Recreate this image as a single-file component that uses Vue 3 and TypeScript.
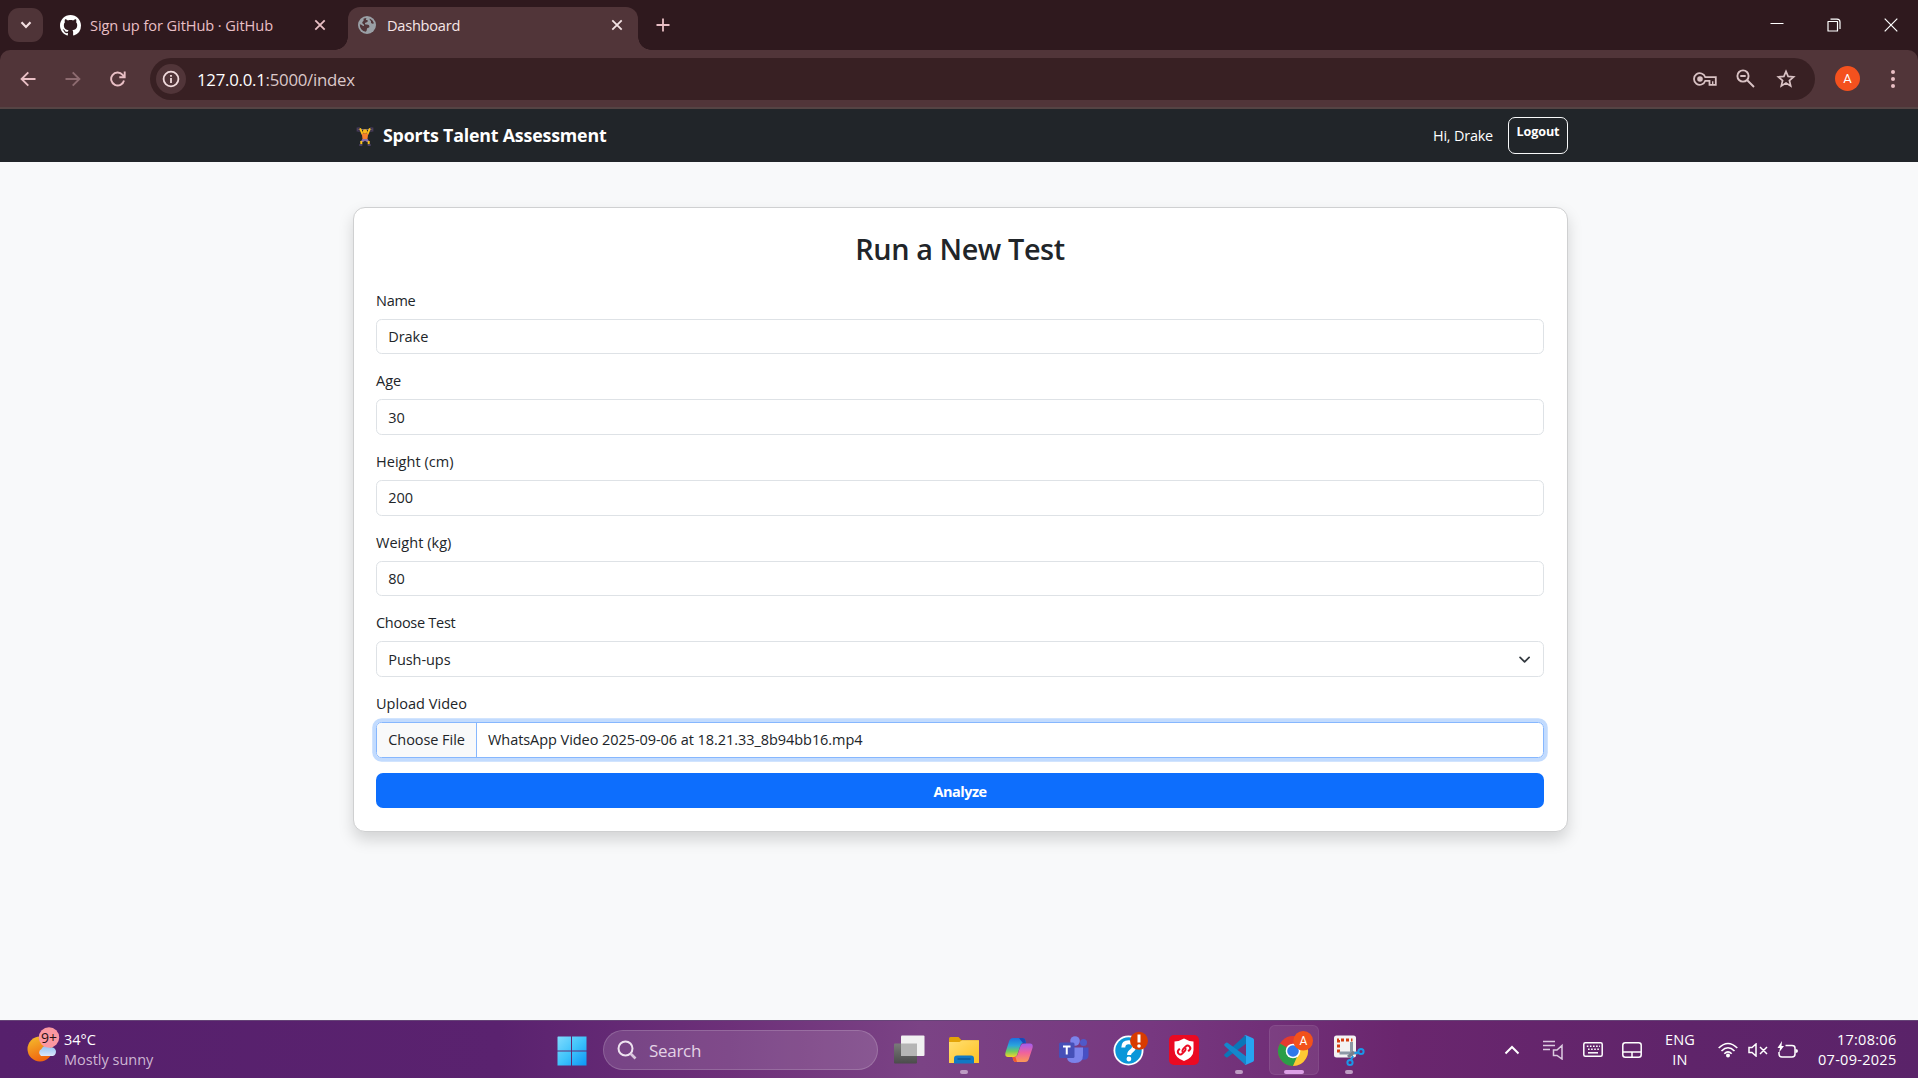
<script setup lang="ts">
interface Field {
  label: string
  value: string
  tight?: boolean
}

const fields: Field[] = [
  { label: 'Name', value: 'Drake', tight: true },
  { label: 'Age', value: '30' },
  { label: 'Height (cm)', value: '200' },
  { label: 'Weight (kg)', value: '80' },
]
</script>

<template>
  <div class="screen">
    <header class="tabstrip">
      <div class="tab-menu">
        <svg width="12" height="8" viewBox="0 0 12 8"><path d="M1.5 1.3 6 5.9 10.5 1.3" fill="none" stroke="#f3dfe1" stroke-width="2.2" /></svg>
      </div>
      <div class="tab">
        <svg width="21" height="21" viewBox="0 0 16 16"><path fill="#fff" d="M8 0C3.58 0 0 3.58 0 8c0 3.54 2.29 6.53 5.47 7.59.4.07.55-.17.55-.38 0-.19-.01-.82-.01-1.49-2.01.37-2.53-.49-2.69-.94-.09-.23-.48-.94-.82-1.13-.28-.15-.68-.52-.01-.53.63-.01 1.08.58 1.23.82.72 1.21 1.87.87 2.33.66.07-.52.28-.87.51-1.07-1.78-.2-3.64-.89-3.64-3.95 0-.87.31-1.59.82-2.15-.08-.2-.36-1.02.08-2.12 0 0 .67-.21 2.2.82.64-.18 1.32-.27 2-.27s1.36.09 2 .27c1.53-1.04 2.2-.82 2.2-.82.44 1.1.16 1.92.08 2.12.51.56.82 1.27.82 2.15 0 3.07-1.87 3.75-3.65 3.95.29.25.54.73.54 1.48 0 1.07-.01 1.93-.01 2.2 0 .21.15.46.55.38A8.01 8.01 0 0 0 16 8c0-4.42-3.58-8-8-8" /></svg>
        <span class="tab-title">Sign up for GitHub · GitHub</span>
        <svg class="x" width="12" height="12" viewBox="0 0 12 12"><path d="M1.3 1.3 10.7 10.7M10.7 1.3 1.3 10.7" stroke="#e9bfc5" stroke-width="1.8" /></svg>
      </div>
      <div class="tab active">
        <svg width="18" height="18" viewBox="0 0 18 18"><circle cx="9" cy="9" r="9" fill="#9aa0a6" /><path d="M8.6 1.9c-1 1-.8 2 .2 2.2 1 .1 1.4 1 .7 1.6-.9.8-2.2.4-2.5 1.5-.3 1 .6 1.4 1.7 1.3 1.7-.1 2.7.7 2.7 1.9 0 1-.7 1.4-1.6 1.5-1 .2-.9 1.2-1 2-.1.7-.5 1.2-1.1 1.9A7.2 7.2 0 0 1 1.8 8.2c1 .3 2.2.8 3 1.5.6.5 1.4.2 1.2-.7-.2-.8-1.2-1.1-1.6-1.8-.5-1 .3-1.6 1-2.3.6-.7.1-1.5 0-2.1A7 7 0 0 1 8.6 1.9z" fill="#513539" /><path d="M11.7 2.4A7.2 7.2 0 0 1 16 7.3c-1 .7-2.2.6-2.8-.3-.5-.8.1-1.4-.4-2.2-.5-.7-1.4-.9-1.1-2.4z" fill="#513539" /></svg>
        <span class="tab-title">Dashboard</span>
        <svg class="x" width="12" height="12" viewBox="0 0 12 12"><path d="M1.3 1.3 10.7 10.7M10.7 1.3 1.3 10.7" stroke="#f3e3e4" stroke-width="1.8" /></svg>
      </div>
      <svg class="plus" width="14" height="14" viewBox="0 0 14 14"><path d="M7 .5v13M.5 7h13" stroke="#e9bfc5" stroke-width="1.8" /></svg>
      <div class="win">
        <svg width="14" height="14" viewBox="0 0 14 14"><path d="M.5 5.5h13" stroke="#fff" /></svg>
        <svg width="14" height="14" viewBox="0 0 14 14"><path d="M1 3.5h9.5V13H1zM3.5 1.1H10q3 0 3 3V11" fill="none" stroke="#fff" stroke-width="1.2" stroke-linejoin="round" /></svg>
        <svg width="14" height="14" viewBox="0 0 14 14"><path d="M.7.7 13.3 13.3M13.3.7.7 13.3" stroke="#fff" stroke-width="1.2" /></svg>
      </div>
    </header>

    <div class="toolbar-back">
      <div class="toolbar">
        <div class="nav-btns">
          <svg width="16" height="16" viewBox="0 0 16 16"><path d="M15.5 8H2M8.3 1.3 1.6 8l6.700 6.700" fill="none" stroke="#e9bfc5" stroke-width="1.9" /></svg>
          <svg width="16" height="16" viewBox="0 0 16 16"><path d="M.5 8H14M7.7 1.3 14.4 8l-6.700 6.700" fill="none" stroke="#8d6b70" stroke-width="1.9" /></svg>
          <svg width="16" height="16" viewBox="0 0 16 16"><path d="M14 9.5A6.5 6.5 0 1 1 12.6 3.8L14.5 5.8M14.7.5v5.7H9.3" fill="none" stroke="#e9bfc5" stroke-width="1.9" /></svg>
        </div>
        <div class="omnibox">
          <div class="info">
            <svg width="18" height="18" viewBox="0 0 18 18"><circle cx="9" cy="9" r="7.4" fill="none" stroke="#f0dadc" stroke-width="1.8" /><path d="M9 8v5M9 4.9v1.9" stroke="#f0dadc" stroke-width="1.8" /></svg>
          </div>
          <span class="url"><b>127.0.0.1</b>:5000/index</span>
          <div class="omni-icons">
            <svg width="24" height="14" viewBox="0 0 24 14"><path d="M12.3 5.2A5.8 5.8 0 1 0 12.3 8.8H16.5V12.8H22.8V5.2Z" fill="none" stroke="#d9c2c4" stroke-width="1.8" /><circle cx="7" cy="7" r="2.8" fill="#d9c2c4" /><path d="M19.7 9.3v3.5" stroke="#d9c2c4" stroke-width="1.4" /></svg>
            <svg width="19" height="19" viewBox="0 0 19 19"><circle cx="7" cy="7" r="5.6" fill="none" stroke="#d9c2c4" stroke-width="1.9" /><path d="M4.3 7h5.4M11 11l7 7" stroke="#d9c2c4" stroke-width="1.9" /></svg>
            <svg width="20" height="20" viewBox="0 0 20 20"><path d="M10 2.4 12.1 7.4 17.6 7.9 13.4 11.5 14.7 16.9 10 14 5.3 16.9 6.6 11.5 2.4 7.9 7.9 7.4Z" fill="none" stroke="#d9c2c4" stroke-width="1.7" /></svg>
          </div>
        </div>
        <span class="avatar">A</span>
        <svg class="kebab" width="6" height="20" viewBox="0 0 6 20"><g fill="#e9bfc5"><circle cx="3" cy="3" r="2" /><circle cx="3" cy="10" r="2" /><circle cx="3" cy="17" r="2" /></g></svg>
      </div>
    </div>

    <nav class="navbar">
      <div class="brand">
        <svg width="20" height="20" viewBox="0 0 20 20">
          <path d="M2 3.5h16" stroke="#6f6b7a" stroke-width="1" />
          <path d="M2.3 1.5v4M4 1v5M17.7 1.5v4M16 1v5" stroke="#4b3d5e" stroke-width="1.3" />
          <path d="M5.3 3 7.5 8M14.7 3l-2.2 5" stroke="#fcc21b" stroke-width="1.9" stroke-linecap="round" />
          <circle cx="10" cy="5.5" r="2.2" fill="#fcb61b" />
          <path d="M6.8 7.6h6.4l-.8 6H7.6z" fill="#f77f2e" />
          <path d="M7.4 13h5.2l2 3H12L10 14.8 8 16H5.4z" fill="#8a6fa8" />
          <path d="M6.3 15v3.3M13.7 15v3.3" stroke="#fcc21b" stroke-width="2" />
          <path d="M4.3 19h3M12.7 19h3" stroke="#5b4a78" stroke-width="1.4" />
        </svg>
        <span>Sports Talent Assessment</span>
      </div>
      <div class="user">
        <span>Hi, Drake</span>
        <a class="logout">Logout</a>
      </div>
    </nav>

    <main class="page">
      <section class="card">
        <h2>Run a New Test</h2>
        <div v-for="f in fields" :key="f.label" class="field">
          <div class="label" :class="{ tight: f.tight }">{{ f.label }}</div>
          <div class="control">{{ f.value }}</div>
        </div>
        <div class="field">
          <div class="label tight">Choose Test</div>
          <div class="control select">
            <span>Push-ups</span>
            <svg width="15" height="11.25" viewBox="0 0 16 12"><path d="m3.300 3.700 4.800 4.700 4.800-4.700" fill="none" stroke="#343a40" stroke-width="1.9" stroke-linecap="round" stroke-linejoin="round" /></svg>
          </div>
        </div>
        <div class="field">
          <div class="label">Upload Video</div>
          <div class="control file">
            <span class="choose">Choose File</span>
            <span class="filename">WhatsApp Video 2025-09-06 at 18.21.33_8b94bb16.mp4</span>
          </div>
        </div>
        <div class="analyze">Analyze</div>
      </section>
    </main>

    <footer class="taskbar">
      <div class="weather">
        <svg width="34" height="36" viewBox="0 0 34 36">
          <defs>
            <linearGradient id="sun" x1="0" y1="0" x2=".4" y2="1"><stop offset="0" stop-color="#f5c02e" /><stop offset="1" stop-color="#f0660f" /></linearGradient>
            <linearGradient id="cloud" x1="0" y1="0" x2="0" y2="1"><stop offset="0" stop-color="#8fc2f3" /><stop offset="1" stop-color="#dbe6fa" /></linearGradient>
          </defs>
          <circle cx="13" cy="22" r="12.5" fill="url(#sun)" />
          <path d="M14 29a4 4 0 0 1 .5-7 5 5 0 0 1 8.500-1.500 4.300 4.300 0 0 1 3 8.500z" fill="url(#cloud)" />
          <circle cx="22" cy="10.5" r="10.2" fill="#fb98a1" />
        </svg>
        <span class="badge">9+</span>
        <div class="weather-text"><span>34°C</span><span class="dim">Mostly sunny</span></div>
      </div>

      <div class="apps">
        <svg class="start" width="30" height="30" viewBox="0 0 30 30">
          <defs><linearGradient id="win" gradientUnits="userSpaceOnUse" x1="0" y1="0" x2="30" y2="30"><stop offset="0" stop-color="#83dcfd" /><stop offset=".5" stop-color="#3fc3fb" /><stop offset="1" stop-color="#0a95f5" /></linearGradient></defs>
          <path d="M1 .5h13v14H.5V1zM15 .5h14.500v14H15zM.5 15.500H14v14H.5zM15 15.500h14.500v14H15z" fill="url(#win)" />
        </svg>
        <div class="search">
          <svg width="20" height="20" viewBox="0 0 20 20"><circle cx="8.5" cy="8.5" r="7" fill="none" stroke="#eee3f0" stroke-width="2" /><path d="m13.500 13.500 5 5" stroke="#d9c6dd" stroke-width="2.6" /></svg>
          <span>Search</span>
        </div>
        <div class="app">
          <svg width="32" height="32" viewBox="0 0 32 32">
            <defs><linearGradient id="tv" x1="0" y1="0" x2="0" y2="1"><stop offset="0" stop-color="#7a7a7a" /><stop offset="1" stop-color="#4b4b4b" /></linearGradient></defs>
            <rect x="1" y="9.5" width="23" height="20" rx="1" fill="url(#tv)" /><rect x="8" y="1.5" width="23.5" height="20.5" rx="1" fill="#f1f1f1" /><path d="M8 9.500h16V22H8z" fill="#b5b5b5" />
          </svg>
        </div>
        <div class="app">
          <svg width="32" height="32" viewBox="0 0 32 32">
            <defs><linearGradient id="fold" x1="0" y1="0" x2="1" y2="1"><stop offset="0" stop-color="#ffdf73" /><stop offset="1" stop-color="#ffc221" /></linearGradient></defs>
            <path d="M1 4.500Q1 3 2.500 3h8l3 3.200H30Q31 6.200 31 7.500V15H1z" fill="#e3a408" /><path d="M1 8h10.500l2.500-1.800H31V29H1z" fill="url(#fold)" /><path d="M6 29.500v-5q0-3 3-3h14q3 0 3 3v5z" fill="#1379c4" /><path d="M9.500 25h13" stroke="#0a4f8f" stroke-width="1.2" />
          </svg>
          <i class="dot"></i>
        </div>
        <div class="app">
          <svg width="30" height="30" viewBox="0 0 30 30">
            <defs>
              <linearGradient id="cpa" x1="0" y1="0" x2="0" y2="1"><stop offset="0" stop-color="#1b6fe0" /><stop offset=".4" stop-color="#2ba5dc" /><stop offset=".7" stop-color="#6ecb60" /><stop offset="1" stop-color="#f6d42a" /></linearGradient>
              <linearGradient id="cpb" x1="0" y1="0" x2="0" y2="1"><stop offset="0" stop-color="#a15cf0" /><stop offset=".5" stop-color="#f0629c" /><stop offset="1" stop-color="#fb9a55" /></linearGradient>
            </defs>
            <path d="M9 3h9.500q2.500 0 3 3l.5 2h-3q-2 0-2.800 3L13.500 19q-.8 3-3.500 3H4Q.5 22 1.500 17.500L5 6.500Q6 3 9 3z" fill="url(#cpa)" />
            <path d="M21 27h-9q-2.500 0-3-3l-.5-2H11q2 0 2.800-3L16.500 11q.8-2.500 3.500-2.500h6Q29.500 8.500 28.500 13L25 23.500Q24 27 21 27z" fill="url(#cpb)" />
            <path d="M15 3h3.500q2.500 0 3 3l.5 2.300h-3z" fill="#1a49b8" /><path d="M8.500 22h3l1.500 5h-1q-2.500 0-3-3z" fill="#f0552e" />
          </svg>
        </div>
        <div class="app">
          <svg width="32" height="32" viewBox="0 0 32 32">
            <circle cx="25.5" cy="8.5" r="3.5" fill="#5059c9" /><path d="M22 13.500h8.500v8q0 4-4.500 4.300h-4z" fill="#4750c4" /><circle cx="17" cy="7" r="4.8" fill="#7b83eb" /><path d="M9 13.500h16V21q0 8-8 8t-8-6z" fill="#7b83eb" /><rect x="1" y="8.5" width="15.5" height="15.5" rx="1.5" fill="#4650b8" /><path d="M5 12.500h7.500M8.750 12.500v8" stroke="#fff" stroke-width="2" />
          </svg>
        </div>
        <div class="app">
          <svg width="38" height="38" viewBox="0 0 38 38">
            <circle cx="18.5" cy="19.5" r="15" fill="#fff" /><circle cx="18.5" cy="19.5" r="13.2" fill="#0a97d9" /><path d="M13.300 16.500q0-5.300 5.400-5.300t5.300 4.600q0 2.500-2.600 4.200-2.300 1.500-2.300 4" fill="none" stroke="#fff" stroke-width="4" /><circle cx="18.9" cy="28" r="2.4" fill="#fff" /><circle cx="29" cy="9.8" r="9" fill="#d83b01" /><path d="M29 3.500v8" stroke="#fff" stroke-width="3" /><circle cx="29" cy="15" r="1.8" fill="#fff" />
          </svg>
        </div>
        <div class="app">
          <svg width="32" height="32" viewBox="0 0 32 32">
            <rect x="1" y="1" width="30" height="30" rx="5" fill="#ea0a22" /><path d="M16 4.500q4.500 2.800 9.500 3v8.500q0 7.500-9.500 11-9.500-3.500-9.500-11V7.500q5-.2 9.500-3z" fill="#fff" />
            <g transform="rotate(-45 16 16)" fill="none" stroke="#ea0a22" stroke-width="2"><path d="M18.500 15.500Q17.500 17.300 15.700 17.300H12.200a2.600 2.600 0 0 1 0-5.200H14" /><path d="M13.500 16.500Q14.500 14.700 16.300 14.700H19.800a2.600 2.600 0 0 1 0 5.200H18" /></g>
          </svg>
        </div>
        <div class="app">
          <svg width="32" height="32" viewBox="0 0 32 32">
            <path d="M22.500 1 1.500 20.300q-.8.800 0 1.600l1.500 1.400q.8.600 1.600 0L24 9z" fill="#0b76b8" /><path d="M22.500 31 1.500 11.700q-.8-.8 0-1.600L3 8.700q.8-.6 1.600 0L24 23z" fill="#1487cc" /><path d="M22.500 1 30 4.300q1 .5 1 1.600v20.200q0 1.100-1 1.600L22.500 31q-.7.200-1.300-.4Q23 31 23 29V3q0-2-1.800-1.600z" fill="#27a4f1" />
          </svg>
          <i class="dot"></i>
        </div>
        <div class="app current">
          <svg width="38" height="38" viewBox="0 0 38 38">
            <circle cx="18" cy="20" r="15" fill="#e33b2e" />
            <path d="M18 20 5 12.500A15 15 0 0 0 18 35l6.500-11.200z" fill="#2b9e48" /><path d="M18 20h6.500L18 35a15 15 0 0 0 13-22.500H18z" fill="#fcc934" /><path d="M18 13h13L26 8 12 8z" fill="#e33b2e" />
            <circle cx="18" cy="20" r="7.3" fill="#fff" /><circle cx="18" cy="20" r="5.8" fill="#2f78ea" /><circle cx="28.2" cy="9.8" r="9.8" fill="#f2511b" />
          </svg>
          <span class="mini">A</span>
          <i class="dot wide"></i>
        </div>
        <div class="app">
          <svg width="34" height="34" viewBox="0 0 34 34">
            <rect x="2" y="2.5" width="22" height="22" rx="2.5" fill="#f3f3f3" /><path d="M6.500 19.500V7h14" fill="none" stroke="#d43d10" stroke-width="3" stroke-dasharray="3 2" /><path d="M19.500 9v14M7.500 20h18" stroke="#8c98a5" stroke-width="3" /><path d="m16 24 6-5" stroke="#76818d" stroke-width="3" /><circle cx="29" cy="18.5" r="2.6" fill="none" stroke="#1b97e8" stroke-width="2" /><circle cx="18" cy="29.5" r="2.6" fill="none" stroke="#1b97e8" stroke-width="2" /><path d="m19 27 2-4M26.500 19.500l-4 .8" stroke="#1b97e8" stroke-width="2" />
          </svg>
          <i class="dot"></i>
        </div>
      </div>

      <div class="tray">
        <svg class="t1" width="16" height="10" viewBox="0 0 16 10"><path d="m1.500 8.500 6.500-6.500 6.500 6.500" fill="none" stroke="#fff" stroke-width="2" /></svg>
        <svg class="t2" width="20" height="20" viewBox="0 0 20 20"><path d="M0 1.500h12M0 5.500h12M0 9.500h7M10.500 10v5.500h3.500L19 19V5.500L14 10z" fill="none" stroke="#dccae0" stroke-width="1.5" /></svg>
        <svg class="t3" width="20" height="15" viewBox="0 0 20 15"><rect x=".8" y=".8" width="18.4" height="13.4" rx="1.5" fill="none" stroke="#fff" stroke-width="1.5" /><path d="M3.800 4.300H17M5 7.300h12" stroke="#fff" stroke-width="1.6" stroke-dasharray="1.6 1.5" /><path d="M5 10.800h10" stroke="#fff" stroke-width="1.5" /></svg>
        <svg class="t4" width="20" height="16" viewBox="0 0 20 16"><rect x=".8" y=".8" width="18.4" height="14.4" rx="2.5" fill="none" stroke="#fff" stroke-width="1.5" /><path d="M1 10h18M10 10v5" stroke="#fff" stroke-width="1.5" /></svg>
        <div class="lang"><span>ENG</span><span>IN</span></div>
        <svg class="t5" width="20" height="16" viewBox="0 0 20 16"><g fill="none" stroke="#fff" stroke-width="1.6"><path d="M.7 6Q10-3 19.300 6M3.500 9Q10 2.500 16.500 9M6.300 11.700Q10 8 13.700 11.700" /></g><circle cx="10" cy="13.5" r="2" fill="#fff" /></svg>
        <svg class="t6" width="20" height="14" viewBox="0 0 20 14"><path d="M1 4.500v5h3L8 13V1L4 4.500zM12 4l7 7M19 4l-7 7" fill="none" stroke="#fff" stroke-width="1.5" /></svg>
        <svg class="t7" width="22" height="18" viewBox="0 0 22 18"><path d="M8.500 4.500H15q3 0 3 2.500v6q0 3-3 3H5q-3 0-3-3v-2" fill="none" stroke="#fff" stroke-width="1.5" /><path d="M18.500 8q2.500 0 2.500 2t-2.500 2zM5 0 .5 7H3L2 11.500 7 5H4.500z" fill="#fff" /></svg>
        <div class="clock"><span>17:08:06</span><span>07-09-2025</span></div>
      </div>
    </footer>
  </div>
</template>

<style>
body {
  margin: 0;
}
</style>

<style scoped>
* {
  box-sizing: border-box;
}
.screen {
  width: 1918px;
  height: 1078px;
  display: flex;
  flex-direction: column;
  overflow: hidden;
  background: #f8f9fa;
  font-family: "Open Sans", "Noto Sans", sans-serif;
  white-space: nowrap;
}
svg {
  display: block;
  flex: none;
}
.tabstrip {
  height: 50px;
  flex: none;
  display: flex;
  align-items: center;
  background: #2f191e;
  padding-left: 8px;
}
.tab-menu {
  width: 35px;
  height: 34px;
  border-radius: 11px;
  background: #4f3438;
  display: flex;
  align-items: center;
  justify-content: center;
}
.tab {
  width: 305px;
  height: 43px;
  display: flex;
  align-items: center;
  padding: 0 22px 0 17px;
  font-size: 14.6px;
  letter-spacing: -0.08px;
  color: #e9bfc5;
}
.tab-title {
  margin-left: 9px;
}
.x {
  margin-left: auto;
}
.tab.active {
  position: relative;
  align-self: flex-end;
  width: 290px;
  padding: 0 15px 7px 10px;
  background: #513539;
  border-radius: 12px 12px 0 0;
  color: #f6e6e7;
  letter-spacing: -0.25px;
}
.active .tab-title {
  margin-left: 11px;
}
.tab.active::before,
.tab.active::after {
  content: "";
  position: absolute;
  bottom: 0;
  width: 13px;
  height: 13px;
}
.tab.active::before {
  left: -13px;
  background: radial-gradient(circle at 0 0, transparent 12.5px, #513539 13px);
}
.tab.active::after {
  right: -13px;
  background: radial-gradient(circle at 100% 0, transparent 12.5px, #513539 13px);
}
.plus {
  margin-left: 18px;
}
.win {
  margin-left: auto;
  margin-right: 20px;
  display: flex;
  gap: 43px;
}
.toolbar-back {
  background: #2f191e;
  flex: none;
}
.toolbar {
  height: 59px;
  background: #513539;
  border-bottom: 2px solid #554444;
  border-radius: 10px 10px 0 0;
  display: flex;
  align-items: center;
}
.nav-btns {
  display: flex;
  gap: 29px;
  margin-left: 20px;
  width: 130px;
  flex: none;
}
.omnibox {
  width: 1665px;
  height: 42px;
  border-radius: 21px;
  background: #382023;
  display: flex;
  align-items: center;
  padding: 0 19px 0 6px;
}
.info {
  width: 30px;
  height: 30px;
  border-radius: 50%;
  background: #513539;
  display: flex;
  align-items: center;
  justify-content: center;
}
.url {
  margin: 2px 0 0 11px;
  font-size: 16.8px;
  letter-spacing: -0.25px;
  color: #dcc8ca;
}
.url b {
  font-weight: 400;
  color: #fff;
}
.omni-icons {
  margin-left: auto;
  display: flex;
  align-items: center;
  gap: 20px;
}
.omni-icons svg:first-child {
  margin-right: -1px;
}
.omni-icons svg:nth-child(2) {
  margin-right: 1px;
}
.avatar {
  width: 25px;
  height: 25px;
  margin-left: 20px;
  border-radius: 50%;
  background: #f4511e;
  color: #fff;
  font: 13px/25px Roboto, sans-serif;
  text-align: center;
}
.kebab {
  margin-left: 29.5px;
}
.navbar {
  height: 53px;
  flex: none;
  background: #212529;
  padding: 0 350px 0 355px;
  display: flex;
  align-items: center;
  justify-content: space-between;
  color: #fff;
}
.brand {
  display: flex;
  align-items: center;
  gap: 8px;
  margin-bottom: 2px;
  font-size: 17.8px;
  font-weight: 700;
  letter-spacing: -0.18px;
}
.brand svg {
  margin-top: 2px;
}
.user {
  display: flex;
  align-items: center;
  gap: 15px;
  font-size: 14.4px;
  letter-spacing: -0.18px;
}
.logout {
  width: 60px;
  height: 37px;
  border: 1px solid #f8f9fa;
  border-radius: 7px;
  text-align: center;
  font-size: 12.6px;
  font-weight: 700;
  line-height: 28px;
  letter-spacing: -0.1px;
}
.page {
  flex: 1;
  padding: 45px 350px 0 353px;
}
.card {
  height: 625px;
  background: #fff;
  border: 1px solid #cfd0d1;
  border-radius: 12px;
  box-shadow: 0 7.5px 15px rgba(0, 0, 0, 0.15);
  padding: 22.3px 23px 0 22px;
  color: #212529;
  font-size: 14.5px;
  letter-spacing: -0.06px;
}
h2 {
  margin: 0 0 22.5px;
  height: 36px;
  line-height: 37.5px;
  text-align: center;
  font-size: 28.8px;
  font-weight: 600;
  letter-spacing: -0.4px;
}
.field {
  margin-bottom: 15px;
}
.label {
  height: 22.5px;
  line-height: 24px;
  margin-bottom: 7.5px;
  letter-spacing: 0.04px;
}
.label.tight {
  letter-spacing: -0.28px;
}
.control {
  height: 35.68px;
  border: 1px solid #dee2e6;
  border-radius: 5.6px;
  padding: 0 11.25px;
  display: flex;
  align-items: center;
}
.select {
  justify-content: space-between;
}
.file {
  border-color: #86b7fe;
  box-shadow: 0 0 0 3.75px rgba(13, 110, 253, 0.25);
  padding: 0;
  overflow: hidden;
}
.choose {
  width: 100px;
  height: 100%;
  display: flex;
  align-items: center;
  padding-left: 11.25px;
  background: #f8f9fa;
  border-right: 1px solid #86b7fe;
}
.filename {
  padding-left: 11px;
}
.analyze {
  height: 35.6px;
  border-radius: 7px;
  background: #0d6efd;
  color: #fff;
  font-weight: 700;
  text-align: center;
  line-height: 37.5px;
  letter-spacing: -0.5px;
}
.taskbar {
  height: 58px;
  flex: none;
  display: flex;
  border-top: 1px solid #664477;
  background: linear-gradient(90deg, #56206c 0%, #5a226f 26%, #6d3079 38%, #7b4385 48%, #773880 60%, #6a266e 73%, #5f246a 88%, #5a2369 100%);
  color: #fff;
  font-size: 14.5px;
}
.weather {
  position: relative;
  width: 557px;
  padding: 6px 0 0 27px;
  display: flex;
  flex: none;
}
.badge {
  position: absolute;
  left: 41px;
  top: 7px;
  font-size: 14px;
  line-height: 20px;
  color: #2a1216;
}
.weather-text {
  display: flex;
  flex-direction: column;
  margin: 3px 0 0 3px;
  line-height: 20px;
}
.dim {
  color: #cdb6d3;
}
.apps {
  display: flex;
  align-items: center;
  height: 57px;
  flex: none;
}
.start {
  margin-top: 3px;
}
.search {
  width: 275px;
  height: 40px;
  margin: 1px 6px 0 16px;
  border-radius: 20px;
  border: 1px solid rgba(255, 255, 255, 0.17);
  background: rgba(255, 255, 255, 0.13);
  display: flex;
  align-items: center;
  padding-left: 13px;
  gap: 12px;
  font-size: 17px;
  letter-spacing: -0.3px;
  color: #e3d3e6;
}
.app {
  position: relative;
  width: 50px;
  height: 50px;
  margin-right: 5px;
  border-radius: 6px;
  display: flex;
  align-items: center;
  justify-content: center;
}
.current {
  background: rgba(255, 255, 255, 0.08);
  border: 1px solid rgba(255, 255, 255, 0.07);
}
.dot {
  position: absolute;
  bottom: 1px;
  left: 21px;
  width: 8px;
  height: 4px;
  border-radius: 2px;
  background: #bd9cc3;
}
.wide {
  left: 14px;
  bottom: 0;
  width: 20px;
  background: #dca0e6;
}
.mini {
  position: absolute;
  left: 29.5px;
  top: 5px;
  font: 12px/20px Roboto, sans-serif;
  color: #fff;
}
.tray {
  display: flex;
  align-items: center;
  margin-left: auto;
  padding-right: 21.5px;
  height: 57px;
}
.t2 { margin-left: 22.5px; }
.t3 { margin-left: 20px; }
.t4 { margin-left: 19.5px; }
.lang {
  display: flex;
  flex-direction: column;
  align-items: center;
  width: 76px;
  line-height: 20px;
  letter-spacing: 0.2px;
}
.t6 { margin-left: 10px; }
.t7 { margin-left: 9px; }
.clock {
  display: flex;
  flex-direction: column;
  align-items: flex-end;
  width: 97.5px;
  line-height: 20px;
  letter-spacing: 0.28px;
}
</style>
